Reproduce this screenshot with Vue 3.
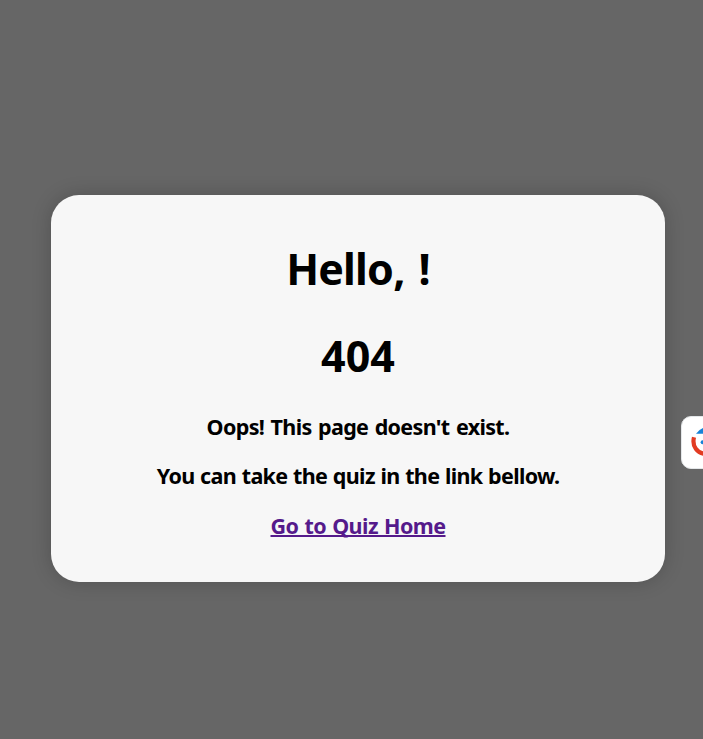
<script setup>
const messages = ["Oops! This page doesn't exist.", 'You can take the quiz in the link bellow.']
</script>

<template>
  <main class="page">
    <section class="card">
      <h1>Hello, !</h1>
      <h1 class="code">404</h1>
      <h2 v-for="(m, i) in messages" :key="i" :class="'line' + i">{{ m }}</h2>
      <h2 class="home"><a href="#">Go to Quiz Home</a></h2>
    </section>
    <div class="widget">
      <svg width="30" height="30" viewBox="0 0 30 30" fill="none">
        <path d="M3 10.2C0.8 19 6 26.8 15 26.8" stroke="#e23b22" stroke-width="4.2" />
        <path d="M5 6.7Q8 2 15 0V6.7Z" fill="#1683d8" />
        <circle cx="11.6" cy="15.3" r="2" fill="#1683d8" />
      </svg>
    </div>
  </main>
</template>

<style>
body { margin: 0; background: #666; overflow: hidden; }
</style>
<style scoped>
.page { height: 739px; box-sizing: border-box; padding: 195px 38px 0 51px; background: #666; overflow: hidden; position: relative; font-family: "Noto Sans", "Open Sans", sans-serif; color: #000; }
.card { height: 387px; box-sizing: border-box; padding-top: 44px; border-radius: 28px; background: #f7f7f7; box-shadow: 0 0 20px rgba(0,0,0,.2); text-align: center; }
h1 { margin: 0; font-size: 43px; line-height: 60px; font-weight: 700; letter-spacing: -0.8px; word-spacing: 3.5px; }
.code { margin-top: 27px; letter-spacing: 0; }
h2 { margin: 0; font-size: 21.5px; line-height: 30px; font-weight: 700; letter-spacing: -0.66px; word-spacing: 1.2px; }
.line0 { margin-top: 26px; word-spacing: 1.5px; }
.line1 { margin-top: 19px; word-spacing: 0.7px; }
.home { margin-top: 20px; letter-spacing: -0.55px; word-spacing: 1px; }
a { color: #551a8b; text-decoration-thickness: 2px; text-decoration-skip-ink: none; }
.widget { position: absolute; left: 681px; top: 416px; width: 50px; height: 53px; box-sizing: border-box; border: 1px solid #e4e7e9; border-radius: 10px; background: #fff; padding: 10px 9px; }
svg { display: block; }
</style>
